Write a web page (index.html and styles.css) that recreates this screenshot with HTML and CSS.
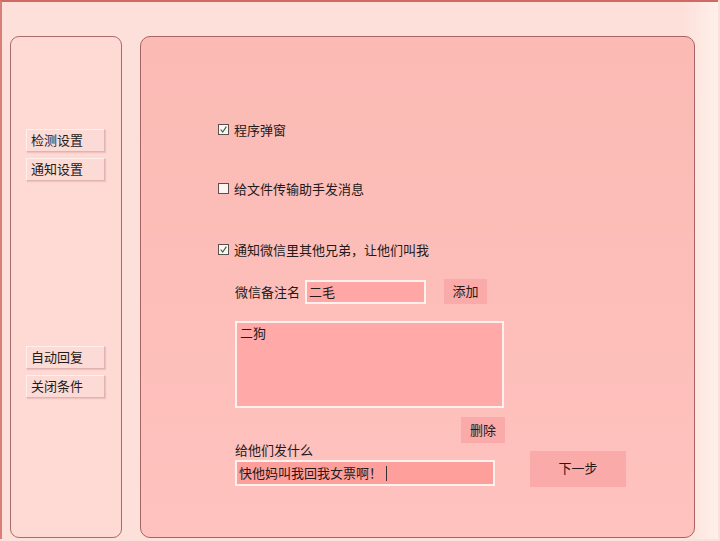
FILE: index.html
```html
<!DOCTYPE html>
<html lang="zh-CN">
<head>
    <meta charset="UTF-8">
    <meta name="viewport" content="width=device-width, initial-scale=1.0">
    <title>微信通知设置</title>
    <link rel="stylesheet" href="styles.css">
</head>
<body>

    <div class="window">
        <div class="sidebar">
            <div class="nav-group top">
                <div class="nav-btn">检测设置</div>
                <div class="nav-btn">通知设置</div>
            </div>
            <div class="nav-group bottom">
                <div class="nav-btn">自动回复</div>
                <div class="nav-btn">关闭条件</div>
            </div>
        </div>

        <div class="content">
            <div class="check-row first">
                <span class="box checked"><svg viewBox="0 0 11 11"><path d="M2 5.5 L4.5 8.5 L9 2" /></svg></span>
                <span>程序弹窗</span>
            </div>
            <div class="check-row second">
                <span class="box"></span>
                <span>给文件传输助手发消息</span>
            </div>
            <div class="check-row third">
                <span class="box checked"><svg viewBox="0 0 11 11"><path d="M2 5.5 L4.5 8.5 L9 2" /></svg></span>
                <span>通知微信里其他兄弟，让他们叫我</span>
            </div>

            <div class="friends">
                <div class="remark-row">
                    <span class="remark-label">微信备注名</span>
                    <div class="field remark-field">二毛</div>
                    <div class="flat-btn add-btn">添加</div>
                </div>
                <div class="field list-box">二狗</div>
                <div class="flat-btn del-btn">删除</div>
                <div class="send-row">
                    <div class="send-col">
                        <div class="send-label">给他们发什么</div>
                        <div class="field send-field">快他妈叫我回我女票啊！<span class="caret"></span></div>
                    </div>
                    <div class="flat-btn next-btn">下一步</div>
                </div>
            </div>
        </div>
    </div>

</body>
</html>
```

FILE: styles.css
```css
body {
    margin: 0;
    font-family: "Noto Sans CJK SC", "Noto Sans", sans-serif;
    font-size: 13px;
    color: #241a1a;
    background-color: #fde0da;
}
.window {
    display: flex;
    width: 718px;
    height: 539px;
    box-sizing: border-box;
    border-top: 2px solid #cf6a66;
    border-left: 2px solid #d97e78;
    padding: 34px 0 0 8px;
    gap: 18px;
    background: linear-gradient(to right, #fde0da 95%, #fff0ea);
}
.sidebar {
    width: 112px;
    height: 502px;
    box-sizing: border-box;
    border: 1.5px solid #a86c6c;
    border-radius: 9px;
    background-color: #ffd9d4;
    padding-left: 15px;
}
.nav-group.top {
    margin-top: 92px;
}
.nav-group.bottom {
    margin-top: 165px;
}
.nav-btn {
    width: 79px;
    height: 23px;
    box-sizing: border-box;
    line-height: 20px;
    padding-left: 4px;
    margin-bottom: 6px;
    background-color: #fcdad6;
    border-top: 1px solid #fff0ec;
    border-left: 1px solid #fff0ec;
    border-right: 1px solid #dfb4b0;
    border-bottom: 1px solid #dfb4b0;
    box-shadow: 1px 1px 1px rgba(190, 130, 125, 0.25);
}
.content {
    width: 555px;
    height: 502px;
    box-sizing: border-box;
    border: 1.5px solid #a86464;
    border-radius: 10px;
    background: linear-gradient(to bottom, #fbbab4, #ffc2be);
    padding: 82px 0 0 77px;
}
.check-row {
    display: flex;
    align-items: center;
    height: 20px;
    gap: 5px;
}
.check-row.second {
    margin-top: 39px;
}
.check-row.third {
    margin-top: 41px;
}
.box {
    width: 11px;
    height: 11px;
    box-sizing: border-box;
    border: 1px solid #5a5050;
    background-color: #fff4f2;
    display: flex;
}
.box svg {
    width: 9px;
    height: 9px;
}
.box path {
    fill: none;
    stroke: #2d6a3a;
    stroke-width: 1.4;
}
.friends {
    margin-left: 17px;
    margin-top: 20px;
}
.remark-row {
    display: flex;
    align-items: center;
    height: 25px;
}
.remark-label {
    width: 70px;
    line-height: 22px;
}
.field {
    box-sizing: border-box;
    border: 2px solid #fff2ee;
    background-color: #ffa7a4;
    padding-left: 2px;
}
.remark-field {
    width: 121px;
    height: 24px;
    line-height: 19px;
}
.flat-btn {
    background-color: #faaaa8;
    text-align: center;
}
.add-btn {
    width: 43px;
    height: 25px;
    line-height: 24px;
    margin-left: 18px;
}
.list-box {
    width: 269px;
    height: 87px;
    margin-top: 17px;
    padding: 1px 0 0 3px;
    line-height: 18px;
    background-color: #ffaaa8;
}
.del-btn {
    width: 44px;
    height: 26px;
    line-height: 25px;
    margin: 9px 0 0 226px;
}
.send-row {
    display: flex;
    align-items: flex-end;
}
.send-label {
    height: 17px;
    line-height: 13px;
}
.send-field {
    width: 260px;
    height: 26px;
    line-height: 22px;
    display: flex;
    align-items: center;
    background-color: #ff9f9c;
}
.caret {
    display: inline-block;
    width: 0;
    height: 15px;
    border-left: 1px solid #333;
    margin-left: 4px;
}
.next-btn {
    width: 96px;
    height: 36px;
    line-height: 34px;
    margin: 0 0 -1px 35px;
}
```
